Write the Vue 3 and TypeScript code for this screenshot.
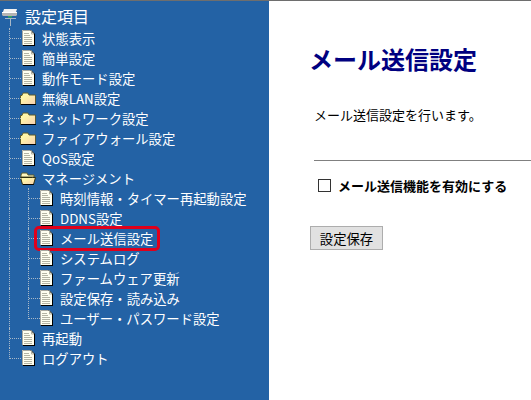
<script setup lang="ts">
type Icon = 'doc' | 'folder' | 'open';

interface MenuItem {
  label: string;
  icon: Icon;
  depth: number;
  last?: boolean;
  active?: boolean;
}

const menu: MenuItem[] = [
  { label: '状態表示', icon: 'doc', depth: 0 },
  { label: '簡単設定', icon: 'doc', depth: 0 },
  { label: '動作モード設定', icon: 'doc', depth: 0 },
  { label: '無線LAN設定', icon: 'folder', depth: 0 },
  { label: 'ネットワーク設定', icon: 'folder', depth: 0 },
  { label: 'ファイアウォール設定', icon: 'folder', depth: 0 },
  { label: 'QoS設定', icon: 'doc', depth: 0 },
  { label: 'マネージメント', icon: 'open', depth: 0 },
  { label: '時刻情報・タイマー再起動設定', icon: 'doc', depth: 1 },
  { label: 'DDNS設定', icon: 'doc', depth: 1 },
  { label: 'メール送信設定', icon: 'doc', depth: 1, active: true },
  { label: 'システムログ', icon: 'doc', depth: 1 },
  { label: 'ファームウェア更新', icon: 'doc', depth: 1 },
  { label: '設定保存・読み込み', icon: 'doc', depth: 1 },
  { label: 'ユーザー・パスワード設定', icon: 'doc', depth: 1, last: true },
  { label: '再起動', icon: 'doc', depth: 0 },
  { label: 'ログアウト', icon: 'doc', depth: 0, last: true }
];
</script>

<template>
  <div class="page">
    <svg class="defs" width="0" height="0" aria-hidden="true">
      <defs>
        <symbol id="ico-doc" viewBox="0 0 13 16">
          <path d="M0 0h9l3 3v12H0z" fill="#fffff0" />
          <path d="M.5 15V.5H9" fill="none" stroke="#a8a8a0" />
          <path d="M9 .5l3.500 3.500" fill="none" stroke="#000" />
          <path d="M9.500 1v3H12" fill="none" stroke="#b0b0a0" />
          <path d="M12 4h1v12H1v-1h11z" fill="#000" />
          <path d="M2 3.500h5M2 5.500h6M2 7.500h8M2 9.500h8M2 11.500h8M2 13.500h8" stroke="#b4b4a4" fill="none" />
        </symbol>
        <symbol id="ico-folder" viewBox="0 0 16 13">
          <path d="M1 3h1l1-2h5l1 2h6v9H1z" fill="url(#fold)" />
          <path d="M.5 12V3.500H2L3 1h5l1 2h6.500v9.500H.5z" fill="none" stroke="#5a5a30" />
          <path d="M1 13h15v-1H1z" fill="#000" />
        </symbol>
        <symbol id="ico-open" viewBox="0 0 17 13">
          <path d="M1 3l1-2h5l1 2h6v2H1z" fill="#fff8c0" stroke="#5a5a30" />
          <path d="M.5 5.500h12l3 0-2 7H2.500z" fill="url(#fold)" stroke="#30300f" />
          <path d="M3 13h11v-.800H3z" fill="#000" />
        </symbol>
        <linearGradient id="fold" x1="0" y1="0" x2="1" y2="1">
          <stop offset="0.3" stop-color="#fff6a8" />
          <stop offset="1" stop-color="#f8d0b0" />
        </linearGradient>
      </defs>
    </svg>

    <nav class="sidebar">
      <div class="root">
        <svg class="server" width="17" height="20" viewBox="0 0 17 20">
          <path d="M9 12h1v8H9zM4 12h11v1H4z" fill="#a8b8c8" />
          <path d="M3 3h13l-1 3H2z" fill="#f2f2f2" />
          <path d="M1 6h15v3l-1 1H2L1 9z" fill="#b4b4b4" />
          <path d="M1 6h15v1H1z" fill="#fff" />
          <path d="M7 10h4v1.500H7z" fill="#33aa55" />
        </svg>
        <span class="root-label">設定項目</span>
      </div>

      <ul class="tree">
        <li
          v-for="item in menu"
          :key="item.label"
          class="row"
          :class="{ nested: item.depth === 1, last: item.last, active: item.active }"
        >
          <span class="trunk" />
          <span v-if="item.depth === 1" class="branch" />
          <svg v-if="item.icon === 'doc'" class="icon doc"><use href="#ico-doc" /></svg>
          <svg v-else-if="item.icon === 'folder'" class="icon folder"><use href="#ico-folder" /></svg>
          <svg v-else class="icon open"><use href="#ico-open" /></svg>
          <span class="label">{{ item.label }}</span>
        </li>
      </ul>
    </nav>

    <main class="content">
      <h1 class="title">メール送信設定</h1>
      <p class="lead">メール送信設定を行います。</p>
      <hr class="rule" />
      <label class="option">
        <input type="checkbox" class="check" />
        <span>メール送信機能を有効にする</span>
      </label>
      <button class="save" type="button">設定保存</button>
    </main>
  </div>
</template>

<style>
html,
body {
  margin: 0;
  background: #fff;
}
</style>

<style scoped>
.page {
  display: flex;
  box-sizing: border-box;
  width: 531px;
  height: 400px;
  overflow: hidden;
  border-top: 1px solid #6e6e6e;
  font-family: 'Noto Sans CJK JP', 'Noto Sans', sans-serif;
}

.defs {
  position: absolute;
}

.sidebar {
  width: 269px;
  flex: none;
  background: #2362a5;
  padding-top: 5px;
  color: #fff;
}

.root {
  display: flex;
  align-items: center;
  height: 20px;
  margin-bottom: 2px;
  padding-left: 1px;
}

.server {
  flex: none;
}

.root-label {
  margin-left: 7px;
  font-size: 16px;
}

.tree {
  list-style: none;
  margin: 0;
  padding: 0;
}

.row {
  display: flex;
  align-items: center;
  height: 20px;
  font-size: 13.33px;
  position: relative;
}

.trunk {
  flex: none;
  box-sizing: border-box;
  width: 22px;
  height: 20px;
  margin-left: 9px;
  margin-right: -9px;
  border-left: 1px dotted #a8b8c8;
  position: relative;
}

.row:not(.nested) .trunk::after {
  content: '';
  position: absolute;
  left: 0;
  top: 10px;
  width: 11px;
  border-top: 1px dotted #a8b8c8;
}

.row.last:not(.nested) .trunk {
  height: 11px;
  align-self: flex-start;
}

.branch {
  flex: none;
  box-sizing: border-box;
  width: 18px;
  height: 20px;
  margin-left: 6px;
  margin-right: -6px;
  border-left: 1px dotted #a8b8c8;
  position: relative;
}

.branch::after {
  content: '';
  position: absolute;
  left: 0;
  top: 10px;
  width: 11px;
  border-top: 1px dotted #a8b8c8;
}

.row.nested.last .branch {
  height: 11px;
  align-self: flex-start;
}

.icon {
  flex: none;
  display: block;
}

.doc {
  width: 13px;
  height: 16px;
}

.folder {
  width: 16px;
  height: 13px;
  margin-left: -2px;
  margin-right: -1px;
}

.open {
  width: 17px;
  height: 13px;
  margin-left: -2px;
  margin-right: -2px;
}

.label {
  margin-left: 7px;
  white-space: nowrap;
}

.row.active::after {
  content: '';
  position: absolute;
  left: 34px;
  top: -2px;
  width: 126px;
  height: 25px;
  box-sizing: border-box;
  border: 3px solid #e0001b;
  border-radius: 5px;
}

.content {
  flex: 1;
  min-width: 0;
  padding-left: 41px;
  color: #000;
}

.title {
  margin: 40px 0 0 -1px;
  font-size: 24px;
  line-height: 36px;
  font-weight: 700;
  color: #000080;
}

.lead {
  margin: 28px 0 0 4px;
  font-size: 13px;
  line-height: 20px;
}

.rule {
  margin: 35px 0 0 4px;
  border: 0;
  border-top: 1px solid #808080;
  height: 0;
}

.option {
  display: flex;
  align-items: center;
  margin: 14px 0 0 8px;
  height: 20px;
  font-size: 13px;
  font-weight: 700;
}

.check {
  appearance: none;
  box-sizing: border-box;
  width: 13px;
  height: 13px;
  margin: 0 7px 0 0;
  background: #fff;
  border: 1px solid #333;
  border-radius: 0;
}

.save {
  display: block;
  box-sizing: border-box;
  width: 73px;
  height: 24px;
  margin-top: 31px;
  padding: 0;
  background: #e1e1e1;
  border: 1px solid #adadad;
  border-radius: 0;
  color: #000;
  font-family: inherit;
  font-size: 13.33px;
}
</style>
